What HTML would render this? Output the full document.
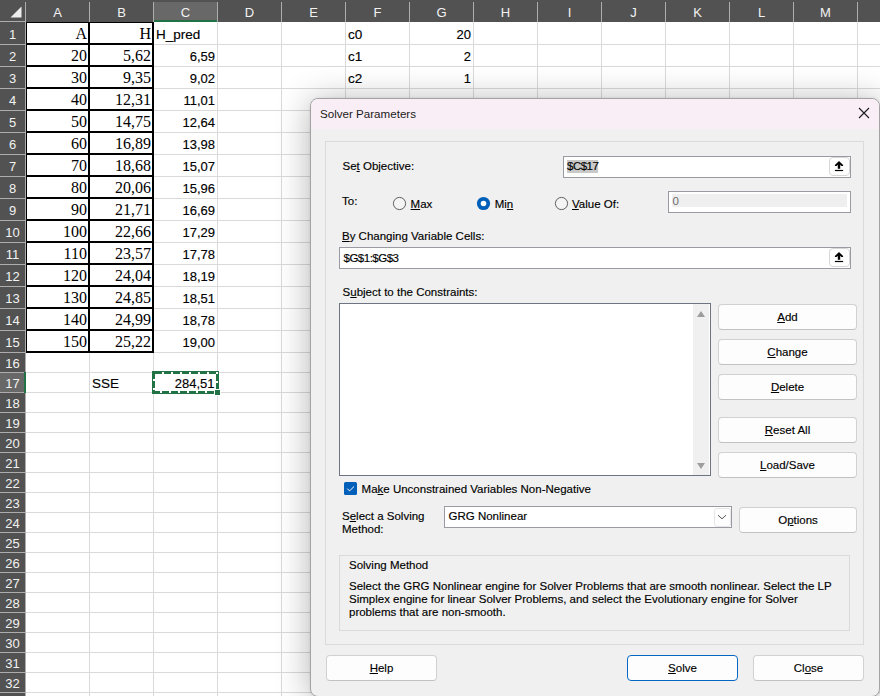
<!DOCTYPE html><html><head><meta charset="utf-8"><style>html,body{margin:0;padding:0;}body{width:880px;height:696px;overflow:hidden;position:relative;background:#fff;font-family:"Liberation Sans",sans-serif;}u{text-decoration:underline;text-underline-offset:1px;text-decoration-thickness:1px;}</style></head><body>
<div style="position:absolute;left:89px;top:22px;width:1px;height:674px;background:#dadada"></div>
<div style="position:absolute;left:153px;top:22px;width:1px;height:674px;background:#dadada"></div>
<div style="position:absolute;left:217px;top:22px;width:1px;height:674px;background:#dadada"></div>
<div style="position:absolute;left:281px;top:22px;width:1px;height:674px;background:#dadada"></div>
<div style="position:absolute;left:345px;top:22px;width:1px;height:674px;background:#dadada"></div>
<div style="position:absolute;left:409px;top:22px;width:1px;height:674px;background:#dadada"></div>
<div style="position:absolute;left:473px;top:22px;width:1px;height:674px;background:#dadada"></div>
<div style="position:absolute;left:537px;top:22px;width:1px;height:674px;background:#dadada"></div>
<div style="position:absolute;left:601px;top:22px;width:1px;height:674px;background:#dadada"></div>
<div style="position:absolute;left:665px;top:22px;width:1px;height:674px;background:#dadada"></div>
<div style="position:absolute;left:729px;top:22px;width:1px;height:674px;background:#dadada"></div>
<div style="position:absolute;left:793px;top:22px;width:1px;height:674px;background:#dadada"></div>
<div style="position:absolute;left:857px;top:22px;width:1px;height:674px;background:#dadada"></div>
<div style="position:absolute;left:921px;top:22px;width:1px;height:674px;background:#dadada"></div>
<div style="position:absolute;left:26px;top:44px;width:854px;height:1px;background:#dadada"></div>
<div style="position:absolute;left:26px;top:66px;width:854px;height:1px;background:#dadada"></div>
<div style="position:absolute;left:26px;top:88px;width:854px;height:1px;background:#dadada"></div>
<div style="position:absolute;left:26px;top:110px;width:854px;height:1px;background:#dadada"></div>
<div style="position:absolute;left:26px;top:132px;width:854px;height:1px;background:#dadada"></div>
<div style="position:absolute;left:26px;top:154px;width:854px;height:1px;background:#dadada"></div>
<div style="position:absolute;left:26px;top:176px;width:854px;height:1px;background:#dadada"></div>
<div style="position:absolute;left:26px;top:198px;width:854px;height:1px;background:#dadada"></div>
<div style="position:absolute;left:26px;top:220px;width:854px;height:1px;background:#dadada"></div>
<div style="position:absolute;left:26px;top:242px;width:854px;height:1px;background:#dadada"></div>
<div style="position:absolute;left:26px;top:264px;width:854px;height:1px;background:#dadada"></div>
<div style="position:absolute;left:26px;top:286px;width:854px;height:1px;background:#dadada"></div>
<div style="position:absolute;left:26px;top:308px;width:854px;height:1px;background:#dadada"></div>
<div style="position:absolute;left:26px;top:330px;width:854px;height:1px;background:#dadada"></div>
<div style="position:absolute;left:26px;top:352px;width:854px;height:1px;background:#dadada"></div>
<div style="position:absolute;left:26px;top:372px;width:854px;height:1px;background:#dadada"></div>
<div style="position:absolute;left:26px;top:392px;width:854px;height:1px;background:#dadada"></div>
<div style="position:absolute;left:26px;top:412px;width:854px;height:1px;background:#dadada"></div>
<div style="position:absolute;left:26px;top:432px;width:854px;height:1px;background:#dadada"></div>
<div style="position:absolute;left:26px;top:452px;width:854px;height:1px;background:#dadada"></div>
<div style="position:absolute;left:26px;top:472px;width:854px;height:1px;background:#dadada"></div>
<div style="position:absolute;left:26px;top:492px;width:854px;height:1px;background:#dadada"></div>
<div style="position:absolute;left:26px;top:512px;width:854px;height:1px;background:#dadada"></div>
<div style="position:absolute;left:26px;top:532px;width:854px;height:1px;background:#dadada"></div>
<div style="position:absolute;left:26px;top:552px;width:854px;height:1px;background:#dadada"></div>
<div style="position:absolute;left:26px;top:572px;width:854px;height:1px;background:#dadada"></div>
<div style="position:absolute;left:26px;top:592px;width:854px;height:1px;background:#dadada"></div>
<div style="position:absolute;left:26px;top:612px;width:854px;height:1px;background:#dadada"></div>
<div style="position:absolute;left:26px;top:632px;width:854px;height:1px;background:#dadada"></div>
<div style="position:absolute;left:26px;top:652px;width:854px;height:1px;background:#dadada"></div>
<div style="position:absolute;left:26px;top:672px;width:854px;height:1px;background:#dadada"></div>
<div style="position:absolute;left:26px;top:692px;width:854px;height:1px;background:#dadada"></div>
<div style="position:absolute;left:0px;top:0px;width:880px;height:22px;background:#525252"></div>
<div style="position:absolute;left:0px;top:0px;width:25px;height:696px;background:#525252"></div>
<div style="position:absolute;left:154px;top:2px;width:63px;height:20px;background:#686868"></div>
<div style="position:absolute;left:153px;top:20px;width:65px;height:2px;background:#217346"></div>
<div style="position:absolute;left:0px;top:373px;width:25px;height:19px;background:#686868"></div>
<div style="position:absolute;left:89px;top:2px;width:1px;height:20px;background:#adadad"></div>
<div style="position:absolute;left:153px;top:2px;width:1px;height:20px;background:#adadad"></div>
<div style="position:absolute;left:217px;top:2px;width:1px;height:20px;background:#adadad"></div>
<div style="position:absolute;left:281px;top:2px;width:1px;height:20px;background:#adadad"></div>
<div style="position:absolute;left:345px;top:2px;width:1px;height:20px;background:#adadad"></div>
<div style="position:absolute;left:409px;top:2px;width:1px;height:20px;background:#adadad"></div>
<div style="position:absolute;left:473px;top:2px;width:1px;height:20px;background:#adadad"></div>
<div style="position:absolute;left:537px;top:2px;width:1px;height:20px;background:#adadad"></div>
<div style="position:absolute;left:601px;top:2px;width:1px;height:20px;background:#adadad"></div>
<div style="position:absolute;left:665px;top:2px;width:1px;height:20px;background:#adadad"></div>
<div style="position:absolute;left:729px;top:2px;width:1px;height:20px;background:#adadad"></div>
<div style="position:absolute;left:793px;top:2px;width:1px;height:20px;background:#adadad"></div>
<div style="position:absolute;left:857px;top:2px;width:1px;height:20px;background:#adadad"></div>
<div style="position:absolute;left:921px;top:2px;width:1px;height:20px;background:#adadad"></div>
<div style="position:absolute;left:25px;top:2px;width:1px;height:696px;background:#adadad"></div>
<div style="position:absolute;left:0px;top:21px;width:25px;height:1px;background:#adadad"></div>
<div style="position:absolute;left:0px;top:44px;width:25px;height:1px;background:#adadad"></div>
<div style="position:absolute;left:0px;top:66px;width:25px;height:1px;background:#adadad"></div>
<div style="position:absolute;left:0px;top:88px;width:25px;height:1px;background:#adadad"></div>
<div style="position:absolute;left:0px;top:110px;width:25px;height:1px;background:#adadad"></div>
<div style="position:absolute;left:0px;top:132px;width:25px;height:1px;background:#adadad"></div>
<div style="position:absolute;left:0px;top:154px;width:25px;height:1px;background:#adadad"></div>
<div style="position:absolute;left:0px;top:176px;width:25px;height:1px;background:#adadad"></div>
<div style="position:absolute;left:0px;top:198px;width:25px;height:1px;background:#adadad"></div>
<div style="position:absolute;left:0px;top:220px;width:25px;height:1px;background:#adadad"></div>
<div style="position:absolute;left:0px;top:242px;width:25px;height:1px;background:#adadad"></div>
<div style="position:absolute;left:0px;top:264px;width:25px;height:1px;background:#adadad"></div>
<div style="position:absolute;left:0px;top:286px;width:25px;height:1px;background:#adadad"></div>
<div style="position:absolute;left:0px;top:308px;width:25px;height:1px;background:#adadad"></div>
<div style="position:absolute;left:0px;top:330px;width:25px;height:1px;background:#adadad"></div>
<div style="position:absolute;left:0px;top:352px;width:25px;height:1px;background:#adadad"></div>
<div style="position:absolute;left:0px;top:372px;width:25px;height:1px;background:#adadad"></div>
<div style="position:absolute;left:0px;top:392px;width:25px;height:1px;background:#adadad"></div>
<div style="position:absolute;left:0px;top:412px;width:25px;height:1px;background:#adadad"></div>
<div style="position:absolute;left:0px;top:432px;width:25px;height:1px;background:#adadad"></div>
<div style="position:absolute;left:0px;top:452px;width:25px;height:1px;background:#adadad"></div>
<div style="position:absolute;left:0px;top:472px;width:25px;height:1px;background:#adadad"></div>
<div style="position:absolute;left:0px;top:492px;width:25px;height:1px;background:#adadad"></div>
<div style="position:absolute;left:0px;top:512px;width:25px;height:1px;background:#adadad"></div>
<div style="position:absolute;left:0px;top:532px;width:25px;height:1px;background:#adadad"></div>
<div style="position:absolute;left:0px;top:552px;width:25px;height:1px;background:#adadad"></div>
<div style="position:absolute;left:0px;top:572px;width:25px;height:1px;background:#adadad"></div>
<div style="position:absolute;left:0px;top:592px;width:25px;height:1px;background:#adadad"></div>
<div style="position:absolute;left:0px;top:612px;width:25px;height:1px;background:#adadad"></div>
<div style="position:absolute;left:0px;top:632px;width:25px;height:1px;background:#adadad"></div>
<div style="position:absolute;left:0px;top:652px;width:25px;height:1px;background:#adadad"></div>
<div style="position:absolute;left:0px;top:672px;width:25px;height:1px;background:#adadad"></div>
<div style="position:absolute;left:0px;top:692px;width:25px;height:1px;background:#adadad"></div>
<div style="position:absolute;left:24px;top:372px;width:2px;height:21px;background:#217346"></div>
<svg style="position:absolute;left:0;top:0" width="25" height="21"><polygon points="10.5,17.5 21.5,6.5 21.5,17.5" fill="#eeeeee"/></svg>
<div style="position:absolute;left:-142.5px;width:400px;top:5.90px;line-height:13px;font-size:13px;font-family:'Liberation Sans', sans-serif;color:#f2f2f2;white-space:pre;text-align:center;">A</div>
<div style="position:absolute;left:-78.5px;width:400px;top:5.90px;line-height:13px;font-size:13px;font-family:'Liberation Sans', sans-serif;color:#f2f2f2;white-space:pre;text-align:center;">B</div>
<div style="position:absolute;left:-14.5px;width:400px;top:5.90px;line-height:13px;font-size:13px;font-family:'Liberation Sans', sans-serif;color:#f2f2f2;white-space:pre;text-align:center;">C</div>
<div style="position:absolute;left:49.5px;width:400px;top:5.90px;line-height:13px;font-size:13px;font-family:'Liberation Sans', sans-serif;color:#f2f2f2;white-space:pre;text-align:center;">D</div>
<div style="position:absolute;left:113.5px;width:400px;top:5.90px;line-height:13px;font-size:13px;font-family:'Liberation Sans', sans-serif;color:#f2f2f2;white-space:pre;text-align:center;">E</div>
<div style="position:absolute;left:177.5px;width:400px;top:5.90px;line-height:13px;font-size:13px;font-family:'Liberation Sans', sans-serif;color:#f2f2f2;white-space:pre;text-align:center;">F</div>
<div style="position:absolute;left:241.5px;width:400px;top:5.90px;line-height:13px;font-size:13px;font-family:'Liberation Sans', sans-serif;color:#f2f2f2;white-space:pre;text-align:center;">G</div>
<div style="position:absolute;left:305.5px;width:400px;top:5.90px;line-height:13px;font-size:13px;font-family:'Liberation Sans', sans-serif;color:#f2f2f2;white-space:pre;text-align:center;">H</div>
<div style="position:absolute;left:369.5px;width:400px;top:5.90px;line-height:13px;font-size:13px;font-family:'Liberation Sans', sans-serif;color:#f2f2f2;white-space:pre;text-align:center;">I</div>
<div style="position:absolute;left:433.5px;width:400px;top:5.90px;line-height:13px;font-size:13px;font-family:'Liberation Sans', sans-serif;color:#f2f2f2;white-space:pre;text-align:center;">J</div>
<div style="position:absolute;left:497.5px;width:400px;top:5.90px;line-height:13px;font-size:13px;font-family:'Liberation Sans', sans-serif;color:#f2f2f2;white-space:pre;text-align:center;">K</div>
<div style="position:absolute;left:561.5px;width:400px;top:5.90px;line-height:13px;font-size:13px;font-family:'Liberation Sans', sans-serif;color:#f2f2f2;white-space:pre;text-align:center;">L</div>
<div style="position:absolute;left:625.5px;width:400px;top:5.90px;line-height:13px;font-size:13px;font-family:'Liberation Sans', sans-serif;color:#f2f2f2;white-space:pre;text-align:center;">M</div>
<div style="position:absolute;left:689.5px;width:400px;top:5.90px;line-height:13px;font-size:13px;font-family:'Liberation Sans', sans-serif;color:#f2f2f2;white-space:pre;text-align:center;">N</div>
<div style="position:absolute;left:-187.5px;width:400px;top:28.40px;line-height:13px;font-size:13px;font-family:'Liberation Sans', sans-serif;color:#f2f2f2;white-space:pre;text-align:center;">1</div>
<div style="position:absolute;left:-187.5px;width:400px;top:50.40px;line-height:13px;font-size:13px;font-family:'Liberation Sans', sans-serif;color:#f2f2f2;white-space:pre;text-align:center;">2</div>
<div style="position:absolute;left:-187.5px;width:400px;top:72.40px;line-height:13px;font-size:13px;font-family:'Liberation Sans', sans-serif;color:#f2f2f2;white-space:pre;text-align:center;">3</div>
<div style="position:absolute;left:-187.5px;width:400px;top:94.40px;line-height:13px;font-size:13px;font-family:'Liberation Sans', sans-serif;color:#f2f2f2;white-space:pre;text-align:center;">4</div>
<div style="position:absolute;left:-187.5px;width:400px;top:116.40px;line-height:13px;font-size:13px;font-family:'Liberation Sans', sans-serif;color:#f2f2f2;white-space:pre;text-align:center;">5</div>
<div style="position:absolute;left:-187.5px;width:400px;top:138.40px;line-height:13px;font-size:13px;font-family:'Liberation Sans', sans-serif;color:#f2f2f2;white-space:pre;text-align:center;">6</div>
<div style="position:absolute;left:-187.5px;width:400px;top:160.40px;line-height:13px;font-size:13px;font-family:'Liberation Sans', sans-serif;color:#f2f2f2;white-space:pre;text-align:center;">7</div>
<div style="position:absolute;left:-187.5px;width:400px;top:182.40px;line-height:13px;font-size:13px;font-family:'Liberation Sans', sans-serif;color:#f2f2f2;white-space:pre;text-align:center;">8</div>
<div style="position:absolute;left:-187.5px;width:400px;top:204.40px;line-height:13px;font-size:13px;font-family:'Liberation Sans', sans-serif;color:#f2f2f2;white-space:pre;text-align:center;">9</div>
<div style="position:absolute;left:-187.5px;width:400px;top:226.40px;line-height:13px;font-size:13px;font-family:'Liberation Sans', sans-serif;color:#f2f2f2;white-space:pre;text-align:center;">10</div>
<div style="position:absolute;left:-187.5px;width:400px;top:248.40px;line-height:13px;font-size:13px;font-family:'Liberation Sans', sans-serif;color:#f2f2f2;white-space:pre;text-align:center;">11</div>
<div style="position:absolute;left:-187.5px;width:400px;top:270.40px;line-height:13px;font-size:13px;font-family:'Liberation Sans', sans-serif;color:#f2f2f2;white-space:pre;text-align:center;">12</div>
<div style="position:absolute;left:-187.5px;width:400px;top:292.40px;line-height:13px;font-size:13px;font-family:'Liberation Sans', sans-serif;color:#f2f2f2;white-space:pre;text-align:center;">13</div>
<div style="position:absolute;left:-187.5px;width:400px;top:314.40px;line-height:13px;font-size:13px;font-family:'Liberation Sans', sans-serif;color:#f2f2f2;white-space:pre;text-align:center;">14</div>
<div style="position:absolute;left:-187.5px;width:400px;top:336.40px;line-height:13px;font-size:13px;font-family:'Liberation Sans', sans-serif;color:#f2f2f2;white-space:pre;text-align:center;">15</div>
<div style="position:absolute;left:-187.5px;width:400px;top:357.20px;line-height:13px;font-size:13px;font-family:'Liberation Sans', sans-serif;color:#f2f2f2;white-space:pre;text-align:center;">16</div>
<div style="position:absolute;left:-187.5px;width:400px;top:377.20px;line-height:13px;font-size:13px;font-family:'Liberation Sans', sans-serif;color:#f2f2f2;white-space:pre;text-align:center;">17</div>
<div style="position:absolute;left:-187.5px;width:400px;top:397.20px;line-height:13px;font-size:13px;font-family:'Liberation Sans', sans-serif;color:#f2f2f2;white-space:pre;text-align:center;">18</div>
<div style="position:absolute;left:-187.5px;width:400px;top:417.20px;line-height:13px;font-size:13px;font-family:'Liberation Sans', sans-serif;color:#f2f2f2;white-space:pre;text-align:center;">19</div>
<div style="position:absolute;left:-187.5px;width:400px;top:437.20px;line-height:13px;font-size:13px;font-family:'Liberation Sans', sans-serif;color:#f2f2f2;white-space:pre;text-align:center;">20</div>
<div style="position:absolute;left:-187.5px;width:400px;top:457.20px;line-height:13px;font-size:13px;font-family:'Liberation Sans', sans-serif;color:#f2f2f2;white-space:pre;text-align:center;">21</div>
<div style="position:absolute;left:-187.5px;width:400px;top:477.20px;line-height:13px;font-size:13px;font-family:'Liberation Sans', sans-serif;color:#f2f2f2;white-space:pre;text-align:center;">22</div>
<div style="position:absolute;left:-187.5px;width:400px;top:497.20px;line-height:13px;font-size:13px;font-family:'Liberation Sans', sans-serif;color:#f2f2f2;white-space:pre;text-align:center;">23</div>
<div style="position:absolute;left:-187.5px;width:400px;top:517.20px;line-height:13px;font-size:13px;font-family:'Liberation Sans', sans-serif;color:#f2f2f2;white-space:pre;text-align:center;">24</div>
<div style="position:absolute;left:-187.5px;width:400px;top:537.20px;line-height:13px;font-size:13px;font-family:'Liberation Sans', sans-serif;color:#f2f2f2;white-space:pre;text-align:center;">25</div>
<div style="position:absolute;left:-187.5px;width:400px;top:557.20px;line-height:13px;font-size:13px;font-family:'Liberation Sans', sans-serif;color:#f2f2f2;white-space:pre;text-align:center;">26</div>
<div style="position:absolute;left:-187.5px;width:400px;top:577.20px;line-height:13px;font-size:13px;font-family:'Liberation Sans', sans-serif;color:#f2f2f2;white-space:pre;text-align:center;">27</div>
<div style="position:absolute;left:-187.5px;width:400px;top:597.20px;line-height:13px;font-size:13px;font-family:'Liberation Sans', sans-serif;color:#f2f2f2;white-space:pre;text-align:center;">28</div>
<div style="position:absolute;left:-187.5px;width:400px;top:617.20px;line-height:13px;font-size:13px;font-family:'Liberation Sans', sans-serif;color:#f2f2f2;white-space:pre;text-align:center;">29</div>
<div style="position:absolute;left:-187.5px;width:400px;top:637.20px;line-height:13px;font-size:13px;font-family:'Liberation Sans', sans-serif;color:#f2f2f2;white-space:pre;text-align:center;">30</div>
<div style="position:absolute;left:-187.5px;width:400px;top:657.20px;line-height:13px;font-size:13px;font-family:'Liberation Sans', sans-serif;color:#f2f2f2;white-space:pre;text-align:center;">31</div>
<div style="position:absolute;left:-187.5px;width:400px;top:677.20px;line-height:13px;font-size:13px;font-family:'Liberation Sans', sans-serif;color:#f2f2f2;white-space:pre;text-align:center;">32</div>
<div style="position:absolute;right:793px;top:26.00px;line-height:16px;font-size:16px;font-family:'Liberation Serif', serif;color:#000;white-space:pre;text-align:right;-webkit-text-stroke:0.00px #000;">A</div>
<div style="position:absolute;right:729px;top:26.00px;line-height:16px;font-size:16px;font-family:'Liberation Serif', serif;color:#000;white-space:pre;text-align:right;-webkit-text-stroke:0.00px #000;">H</div>
<div style="position:absolute;left:156px;top:27.97px;line-height:13.5px;font-size:13.5px;font-family:'Liberation Sans', sans-serif;color:#000;white-space:pre;-webkit-text-stroke:0.15px #000;">H_pred</div>
<div style="position:absolute;right:793px;top:48.00px;line-height:16px;font-size:16px;font-family:'Liberation Serif', serif;color:#000;white-space:pre;text-align:right;-webkit-text-stroke:0.00px #000;">20</div>
<div style="position:absolute;right:729px;top:48.00px;line-height:16px;font-size:16px;font-family:'Liberation Serif', serif;color:#000;white-space:pre;text-align:right;-webkit-text-stroke:0.00px #000;">5,62</div>
<div style="position:absolute;right:665px;top:50.40px;line-height:13px;font-size:13px;font-family:'Liberation Sans', sans-serif;color:#000;white-space:pre;text-align:right;-webkit-text-stroke:0.15px #000;">6,59</div>
<div style="position:absolute;right:793px;top:70.00px;line-height:16px;font-size:16px;font-family:'Liberation Serif', serif;color:#000;white-space:pre;text-align:right;-webkit-text-stroke:0.00px #000;">30</div>
<div style="position:absolute;right:729px;top:70.00px;line-height:16px;font-size:16px;font-family:'Liberation Serif', serif;color:#000;white-space:pre;text-align:right;-webkit-text-stroke:0.00px #000;">9,35</div>
<div style="position:absolute;right:665px;top:72.40px;line-height:13px;font-size:13px;font-family:'Liberation Sans', sans-serif;color:#000;white-space:pre;text-align:right;-webkit-text-stroke:0.15px #000;">9,02</div>
<div style="position:absolute;right:793px;top:92.00px;line-height:16px;font-size:16px;font-family:'Liberation Serif', serif;color:#000;white-space:pre;text-align:right;-webkit-text-stroke:0.00px #000;">40</div>
<div style="position:absolute;right:729px;top:92.00px;line-height:16px;font-size:16px;font-family:'Liberation Serif', serif;color:#000;white-space:pre;text-align:right;-webkit-text-stroke:0.00px #000;">12,31</div>
<div style="position:absolute;right:665px;top:94.40px;line-height:13px;font-size:13px;font-family:'Liberation Sans', sans-serif;color:#000;white-space:pre;text-align:right;-webkit-text-stroke:0.15px #000;">11,01</div>
<div style="position:absolute;right:793px;top:114.00px;line-height:16px;font-size:16px;font-family:'Liberation Serif', serif;color:#000;white-space:pre;text-align:right;-webkit-text-stroke:0.00px #000;">50</div>
<div style="position:absolute;right:729px;top:114.00px;line-height:16px;font-size:16px;font-family:'Liberation Serif', serif;color:#000;white-space:pre;text-align:right;-webkit-text-stroke:0.00px #000;">14,75</div>
<div style="position:absolute;right:665px;top:116.40px;line-height:13px;font-size:13px;font-family:'Liberation Sans', sans-serif;color:#000;white-space:pre;text-align:right;-webkit-text-stroke:0.15px #000;">12,64</div>
<div style="position:absolute;right:793px;top:136.00px;line-height:16px;font-size:16px;font-family:'Liberation Serif', serif;color:#000;white-space:pre;text-align:right;-webkit-text-stroke:0.00px #000;">60</div>
<div style="position:absolute;right:729px;top:136.00px;line-height:16px;font-size:16px;font-family:'Liberation Serif', serif;color:#000;white-space:pre;text-align:right;-webkit-text-stroke:0.00px #000;">16,89</div>
<div style="position:absolute;right:665px;top:138.40px;line-height:13px;font-size:13px;font-family:'Liberation Sans', sans-serif;color:#000;white-space:pre;text-align:right;-webkit-text-stroke:0.15px #000;">13,98</div>
<div style="position:absolute;right:793px;top:158.00px;line-height:16px;font-size:16px;font-family:'Liberation Serif', serif;color:#000;white-space:pre;text-align:right;-webkit-text-stroke:0.00px #000;">70</div>
<div style="position:absolute;right:729px;top:158.00px;line-height:16px;font-size:16px;font-family:'Liberation Serif', serif;color:#000;white-space:pre;text-align:right;-webkit-text-stroke:0.00px #000;">18,68</div>
<div style="position:absolute;right:665px;top:160.40px;line-height:13px;font-size:13px;font-family:'Liberation Sans', sans-serif;color:#000;white-space:pre;text-align:right;-webkit-text-stroke:0.15px #000;">15,07</div>
<div style="position:absolute;right:793px;top:180.00px;line-height:16px;font-size:16px;font-family:'Liberation Serif', serif;color:#000;white-space:pre;text-align:right;-webkit-text-stroke:0.00px #000;">80</div>
<div style="position:absolute;right:729px;top:180.00px;line-height:16px;font-size:16px;font-family:'Liberation Serif', serif;color:#000;white-space:pre;text-align:right;-webkit-text-stroke:0.00px #000;">20,06</div>
<div style="position:absolute;right:665px;top:182.40px;line-height:13px;font-size:13px;font-family:'Liberation Sans', sans-serif;color:#000;white-space:pre;text-align:right;-webkit-text-stroke:0.15px #000;">15,96</div>
<div style="position:absolute;right:793px;top:202.00px;line-height:16px;font-size:16px;font-family:'Liberation Serif', serif;color:#000;white-space:pre;text-align:right;-webkit-text-stroke:0.00px #000;">90</div>
<div style="position:absolute;right:729px;top:202.00px;line-height:16px;font-size:16px;font-family:'Liberation Serif', serif;color:#000;white-space:pre;text-align:right;-webkit-text-stroke:0.00px #000;">21,71</div>
<div style="position:absolute;right:665px;top:204.40px;line-height:13px;font-size:13px;font-family:'Liberation Sans', sans-serif;color:#000;white-space:pre;text-align:right;-webkit-text-stroke:0.15px #000;">16,69</div>
<div style="position:absolute;right:793px;top:224.00px;line-height:16px;font-size:16px;font-family:'Liberation Serif', serif;color:#000;white-space:pre;text-align:right;-webkit-text-stroke:0.00px #000;">100</div>
<div style="position:absolute;right:729px;top:224.00px;line-height:16px;font-size:16px;font-family:'Liberation Serif', serif;color:#000;white-space:pre;text-align:right;-webkit-text-stroke:0.00px #000;">22,66</div>
<div style="position:absolute;right:665px;top:226.40px;line-height:13px;font-size:13px;font-family:'Liberation Sans', sans-serif;color:#000;white-space:pre;text-align:right;-webkit-text-stroke:0.15px #000;">17,29</div>
<div style="position:absolute;right:793px;top:246.00px;line-height:16px;font-size:16px;font-family:'Liberation Serif', serif;color:#000;white-space:pre;text-align:right;-webkit-text-stroke:0.00px #000;">110</div>
<div style="position:absolute;right:729px;top:246.00px;line-height:16px;font-size:16px;font-family:'Liberation Serif', serif;color:#000;white-space:pre;text-align:right;-webkit-text-stroke:0.00px #000;">23,57</div>
<div style="position:absolute;right:665px;top:248.40px;line-height:13px;font-size:13px;font-family:'Liberation Sans', sans-serif;color:#000;white-space:pre;text-align:right;-webkit-text-stroke:0.15px #000;">17,78</div>
<div style="position:absolute;right:793px;top:268.00px;line-height:16px;font-size:16px;font-family:'Liberation Serif', serif;color:#000;white-space:pre;text-align:right;-webkit-text-stroke:0.00px #000;">120</div>
<div style="position:absolute;right:729px;top:268.00px;line-height:16px;font-size:16px;font-family:'Liberation Serif', serif;color:#000;white-space:pre;text-align:right;-webkit-text-stroke:0.00px #000;">24,04</div>
<div style="position:absolute;right:665px;top:270.40px;line-height:13px;font-size:13px;font-family:'Liberation Sans', sans-serif;color:#000;white-space:pre;text-align:right;-webkit-text-stroke:0.15px #000;">18,19</div>
<div style="position:absolute;right:793px;top:290.00px;line-height:16px;font-size:16px;font-family:'Liberation Serif', serif;color:#000;white-space:pre;text-align:right;-webkit-text-stroke:0.00px #000;">130</div>
<div style="position:absolute;right:729px;top:290.00px;line-height:16px;font-size:16px;font-family:'Liberation Serif', serif;color:#000;white-space:pre;text-align:right;-webkit-text-stroke:0.00px #000;">24,85</div>
<div style="position:absolute;right:665px;top:292.40px;line-height:13px;font-size:13px;font-family:'Liberation Sans', sans-serif;color:#000;white-space:pre;text-align:right;-webkit-text-stroke:0.15px #000;">18,51</div>
<div style="position:absolute;right:793px;top:312.00px;line-height:16px;font-size:16px;font-family:'Liberation Serif', serif;color:#000;white-space:pre;text-align:right;-webkit-text-stroke:0.00px #000;">140</div>
<div style="position:absolute;right:729px;top:312.00px;line-height:16px;font-size:16px;font-family:'Liberation Serif', serif;color:#000;white-space:pre;text-align:right;-webkit-text-stroke:0.00px #000;">24,99</div>
<div style="position:absolute;right:665px;top:314.40px;line-height:13px;font-size:13px;font-family:'Liberation Sans', sans-serif;color:#000;white-space:pre;text-align:right;-webkit-text-stroke:0.15px #000;">18,78</div>
<div style="position:absolute;right:793px;top:334.00px;line-height:16px;font-size:16px;font-family:'Liberation Serif', serif;color:#000;white-space:pre;text-align:right;-webkit-text-stroke:0.00px #000;">150</div>
<div style="position:absolute;right:729px;top:334.00px;line-height:16px;font-size:16px;font-family:'Liberation Serif', serif;color:#000;white-space:pre;text-align:right;-webkit-text-stroke:0.00px #000;">25,22</div>
<div style="position:absolute;right:665px;top:336.40px;line-height:13px;font-size:13px;font-family:'Liberation Sans', sans-serif;color:#000;white-space:pre;text-align:right;-webkit-text-stroke:0.15px #000;">19,00</div>
<div style="position:absolute;left:26px;top:22px;width:128px;height:1px;background:#000"></div>
<div style="position:absolute;left:26px;top:22px;width:1px;height:331px;background:#000"></div>
<div style="position:absolute;left:88px;top:22px;width:2px;height:331px;background:#000"></div>
<div style="position:absolute;left:152px;top:22px;width:2px;height:331px;background:#000"></div>
<div style="position:absolute;left:26px;top:43px;width:128px;height:2px;background:#000"></div>
<div style="position:absolute;left:26px;top:65px;width:128px;height:2px;background:#000"></div>
<div style="position:absolute;left:26px;top:87px;width:128px;height:2px;background:#000"></div>
<div style="position:absolute;left:26px;top:109px;width:128px;height:2px;background:#000"></div>
<div style="position:absolute;left:26px;top:131px;width:128px;height:2px;background:#000"></div>
<div style="position:absolute;left:26px;top:153px;width:128px;height:2px;background:#000"></div>
<div style="position:absolute;left:26px;top:175px;width:128px;height:2px;background:#000"></div>
<div style="position:absolute;left:26px;top:197px;width:128px;height:2px;background:#000"></div>
<div style="position:absolute;left:26px;top:219px;width:128px;height:2px;background:#000"></div>
<div style="position:absolute;left:26px;top:241px;width:128px;height:2px;background:#000"></div>
<div style="position:absolute;left:26px;top:263px;width:128px;height:2px;background:#000"></div>
<div style="position:absolute;left:26px;top:285px;width:128px;height:2px;background:#000"></div>
<div style="position:absolute;left:26px;top:307px;width:128px;height:2px;background:#000"></div>
<div style="position:absolute;left:26px;top:329px;width:128px;height:2px;background:#000"></div>
<div style="position:absolute;left:26px;top:351px;width:128px;height:2px;background:#000"></div>
<div style="position:absolute;left:348px;top:27.97px;line-height:13.5px;font-size:13.5px;font-family:'Liberation Sans', sans-serif;color:#000;white-space:pre;-webkit-text-stroke:0.15px #000;">c0</div>
<div style="position:absolute;left:348px;top:49.97px;line-height:13.5px;font-size:13.5px;font-family:'Liberation Sans', sans-serif;color:#000;white-space:pre;-webkit-text-stroke:0.15px #000;">c1</div>
<div style="position:absolute;left:348px;top:71.97px;line-height:13.5px;font-size:13.5px;font-family:'Liberation Sans', sans-serif;color:#000;white-space:pre;-webkit-text-stroke:0.15px #000;">c2</div>
<div style="position:absolute;right:409px;top:28.40px;line-height:13px;font-size:13px;font-family:'Liberation Sans', sans-serif;color:#000;white-space:pre;text-align:right;-webkit-text-stroke:0.15px #000;">20</div>
<div style="position:absolute;right:409px;top:50.40px;line-height:13px;font-size:13px;font-family:'Liberation Sans', sans-serif;color:#000;white-space:pre;text-align:right;-webkit-text-stroke:0.15px #000;">2</div>
<div style="position:absolute;right:409px;top:72.40px;line-height:13px;font-size:13px;font-family:'Liberation Sans', sans-serif;color:#000;white-space:pre;text-align:right;-webkit-text-stroke:0.15px #000;">1</div>
<div style="position:absolute;left:92px;top:376.77px;line-height:13.5px;font-size:13.5px;font-family:'Liberation Sans', sans-serif;color:#000;white-space:pre;-webkit-text-stroke:0.15px #000;">SSE</div>
<div style="position:absolute;right:665.5px;top:377.20px;line-height:13px;font-size:13px;font-family:'Liberation Sans', sans-serif;color:#000;white-space:pre;text-align:right;-webkit-text-stroke:0.15px #000;">284,51</div>
<div style="position:absolute;left:152px;top:371px;width:61px;height:17px;border:3px solid #217346"></div>
<div style="position:absolute;left:162px;top:372px;width:2px;height:2px;background:#fff"></div>
<div style="position:absolute;left:171px;top:372px;width:2px;height:2px;background:#fff"></div>
<div style="position:absolute;left:180px;top:372px;width:2px;height:2px;background:#fff"></div>
<div style="position:absolute;left:189px;top:372px;width:2px;height:2px;background:#fff"></div>
<div style="position:absolute;left:198px;top:372px;width:2px;height:2px;background:#fff"></div>
<div style="position:absolute;left:207px;top:372px;width:2px;height:2px;background:#fff"></div>
<div style="position:absolute;left:216px;top:372px;width:2px;height:2px;background:#fff"></div>
<div style="position:absolute;left:153px;top:379px;width:2px;height:2px;background:#fff"></div>
<div style="position:absolute;left:153px;top:388px;width:2px;height:2px;background:#fff"></div>
<div style="position:absolute;left:216px;top:381px;width:2px;height:2px;background:#fff"></div>
<div style="position:absolute;left:160px;top:391px;width:2px;height:2px;background:#fff"></div>
<div style="position:absolute;left:169px;top:391px;width:2px;height:2px;background:#fff"></div>
<div style="position:absolute;left:178px;top:391px;width:2px;height:2px;background:#fff"></div>
<div style="position:absolute;left:187px;top:391px;width:2px;height:2px;background:#fff"></div>
<div style="position:absolute;left:196px;top:391px;width:2px;height:2px;background:#fff"></div>
<div style="position:absolute;left:205px;top:391px;width:2px;height:2px;background:#fff"></div>
<div style="position:absolute;left:214px;top:389px;width:7px;height:7px;background:#fff"></div>
<div style="position:absolute;left:215px;top:390px;width:5px;height:5px;background:#217346"></div>
<div style="position:absolute;left:310px;top:98px;width:568px;height:597px;border:1px solid #a3a3a3;border-radius:8px;background:#f0f0f0;box-shadow:0 0 3px rgba(0,0,0,0.08), 0 3px 34px rgba(0,0,0,0.30);overflow:hidden"><div style="position:absolute;left:0;top:0;width:100%;height:30px;background:#f9eef5"></div></div>
<div style="position:absolute;left:320px;top:107.98px;line-height:11.6px;font-size:11.6px;font-family:'Liberation Sans', sans-serif;color:#1a1a1a;white-space:pre;">Solver Parameters</div>
<svg style="position:absolute;left:858px;top:107px" width="12" height="12"><path d="M1 1L11 11M11 1L1 11" stroke="#1a1a1a" stroke-width="1.1" fill="none"/></svg>
<div style="position:absolute;left:325px;top:141px;width:537px;height:502px;border:1px solid #dadada"></div>
<div style="position:absolute;left:342.5px;top:160.77px;line-height:11.5px;font-size:11.5px;font-family:'Liberation Sans', sans-serif;color:#000;white-space:pre;-webkit-text-stroke:0.15px #000;">Se<u>t</u> Objective:</div>
<div style="position:absolute;left:563px;top:156px;width:286px;height:20px;border:1px solid #9a9ba2;background:#fff"></div>
<div style="position:absolute;left:567px;top:160px;width:31px;height:13px;background:#c8c8c8"></div>
<div style="position:absolute;left:567px;top:160.77px;line-height:11.5px;font-size:11.5px;font-family:'Liberation Sans', sans-serif;color:#000;white-space:pre;-webkit-text-stroke:0.15px #000;letter-spacing:-0.5px">$C$17</div>
<div style="position:absolute;left:829px;top:157px;width:19px;height:17px;border:1px solid #d6d6d6;border-radius:4px;background:#fefefe"></div>
<svg style="position:absolute;left:829px;top:157px" width="21" height="20"><polygon points="10,3.9 14.1,8 14.1,8.9 12.4,8.9 11.2,7.7 11.2,11.8 8.8,11.8 8.8,7.7 7.6,8.9 5.9,8.9 5.9,8" fill="#000"/><rect x="5.9" y="12.9" width="8.2" height="1.2" fill="#000"/></svg>
<div style="position:absolute;left:342px;top:196.07px;line-height:11.5px;font-size:11.5px;font-family:'Liberation Sans', sans-serif;color:#000;white-space:pre;-webkit-text-stroke:0.15px #000;">To:</div>
<svg style="position:absolute;left:392.0px;top:195.9px" width="15" height="15"><circle cx="7.5" cy="7.5" r="6.1" fill="#f4f4f4" stroke="#5f5f5f" stroke-width="1"/></svg>
<div style="position:absolute;left:410.6px;top:198.67px;line-height:11.5px;font-size:11.5px;font-family:'Liberation Sans', sans-serif;color:#000;white-space:pre;-webkit-text-stroke:0.15px #000;"><u>M</u>ax</div>
<svg style="position:absolute;left:476.0px;top:195.9px" width="15" height="15"><circle cx="7.5" cy="7.5" r="6.6" fill="#005fb8"/><circle cx="7.5" cy="7.5" r="2.8" fill="#fff"/></svg>
<div style="position:absolute;left:494.7px;top:198.67px;line-height:11.5px;font-size:11.5px;font-family:'Liberation Sans', sans-serif;color:#000;white-space:pre;-webkit-text-stroke:0.15px #000;">Mi<u>n</u></div>
<svg style="position:absolute;left:554.0px;top:195.9px" width="15" height="15"><circle cx="7.5" cy="7.5" r="6.1" fill="#f4f4f4" stroke="#5f5f5f" stroke-width="1"/></svg>
<div style="position:absolute;left:572px;top:198.67px;line-height:11.5px;font-size:11.5px;font-family:'Liberation Sans', sans-serif;color:#000;white-space:pre;-webkit-text-stroke:0.15px #000;"><u>V</u>alue Of:</div>
<div style="position:absolute;left:668px;top:191px;width:181px;height:20px;border:1px solid #9a9ba2;background:#fff"></div>
<div style="position:absolute;left:672px;top:194px;width:175px;height:13px;background:#efefef"></div>
<div style="position:absolute;left:672.5px;top:196.07px;line-height:11.5px;font-size:11.5px;font-family:'Liberation Sans', sans-serif;color:#6d6d6d;white-space:pre;">0</div>
<div style="position:absolute;left:342px;top:231.47px;line-height:11.5px;font-size:11.5px;font-family:'Liberation Sans', sans-serif;color:#000;white-space:pre;-webkit-text-stroke:0.15px #000;"><u>B</u>y Changing Variable Cells:</div>
<div style="position:absolute;left:339px;top:247px;width:510px;height:20px;border:1px solid #9a9ba2;background:#fff"></div>
<div style="position:absolute;left:343.5px;top:253.07px;line-height:11.5px;font-size:11.5px;font-family:'Liberation Sans', sans-serif;color:#000;white-space:pre;-webkit-text-stroke:0.15px #000;letter-spacing:-0.5px">$G$1:$G$3</div>
<div style="position:absolute;left:829px;top:248px;width:19px;height:17px;border:1px solid #d6d6d6;border-radius:4px;background:#fefefe"></div>
<svg style="position:absolute;left:829px;top:248px" width="21" height="20"><polygon points="10,3.9 14.1,8 14.1,8.9 12.4,8.9 11.2,7.7 11.2,11.8 8.8,11.8 8.8,7.7 7.6,8.9 5.9,8.9 5.9,8" fill="#000"/><rect x="5.9" y="12.9" width="8.2" height="1.2" fill="#000"/></svg>
<div style="position:absolute;left:342.6px;top:287.07px;line-height:11.5px;font-size:11.5px;font-family:'Liberation Sans', sans-serif;color:#000;white-space:pre;-webkit-text-stroke:0.15px #000;">S<u>u</u>bject to the Constraints:</div>
<div style="position:absolute;left:339px;top:303px;width:370px;height:171px;border:1px solid #6e7582;background:#fff"></div>
<div style="position:absolute;left:693px;top:304px;width:16px;height:171px;background:#f0f0f0"></div>
<svg style="position:absolute;left:693px;top:304px" width="16" height="171"><polygon points="4,13 12,13 8,7" fill="#9d9d9d"/><polygon points="4,159 12,159 8,165" fill="#9d9d9d"/></svg>
<div style="position:absolute;left:718px;top:304px;width:137px;height:24px;border:1px solid #d1d1d1;border-bottom-color:#c2c2c2;border-radius:4px;background:#fdfdfd"></div>
<div style="position:absolute;left:587.5px;width:400px;top:311.67px;line-height:11.5px;font-size:11.5px;font-family:'Liberation Sans', sans-serif;color:#000;white-space:pre;text-align:center;-webkit-text-stroke:0.15px #000;"><u>A</u>dd</div>
<div style="position:absolute;left:718px;top:339px;width:137px;height:24px;border:1px solid #d1d1d1;border-bottom-color:#c2c2c2;border-radius:4px;background:#fdfdfd"></div>
<div style="position:absolute;left:587.5px;width:400px;top:346.67px;line-height:11.5px;font-size:11.5px;font-family:'Liberation Sans', sans-serif;color:#000;white-space:pre;text-align:center;-webkit-text-stroke:0.15px #000;"><u>C</u>hange</div>
<div style="position:absolute;left:718px;top:374px;width:137px;height:24px;border:1px solid #d1d1d1;border-bottom-color:#c2c2c2;border-radius:4px;background:#fdfdfd"></div>
<div style="position:absolute;left:587.5px;width:400px;top:381.67px;line-height:11.5px;font-size:11.5px;font-family:'Liberation Sans', sans-serif;color:#000;white-space:pre;text-align:center;-webkit-text-stroke:0.15px #000;"><u>D</u>elete</div>
<div style="position:absolute;left:718px;top:417px;width:137px;height:24px;border:1px solid #d1d1d1;border-bottom-color:#c2c2c2;border-radius:4px;background:#fdfdfd"></div>
<div style="position:absolute;left:587.5px;width:400px;top:424.67px;line-height:11.5px;font-size:11.5px;font-family:'Liberation Sans', sans-serif;color:#000;white-space:pre;text-align:center;-webkit-text-stroke:0.15px #000;"><u>R</u>eset All</div>
<div style="position:absolute;left:718px;top:452px;width:137px;height:24px;border:1px solid #d1d1d1;border-bottom-color:#c2c2c2;border-radius:4px;background:#fdfdfd"></div>
<div style="position:absolute;left:587.5px;width:400px;top:459.67px;line-height:11.5px;font-size:11.5px;font-family:'Liberation Sans', sans-serif;color:#000;white-space:pre;text-align:center;-webkit-text-stroke:0.15px #000;"><u>L</u>oad/Save</div>
<svg style="position:absolute;left:344px;top:482px" width="14" height="14"><rect x="0" y="0" width="13" height="13" rx="1.6" fill="#005fb8"/><path d="M3.3 6.6L5.6 8.9L10 4.5" stroke="#fff" stroke-width="1" fill="none"/></svg>
<div style="position:absolute;left:361.6px;top:483.87px;line-height:11.5px;font-size:11.5px;font-family:'Liberation Sans', sans-serif;color:#000;white-space:pre;-webkit-text-stroke:0.15px #000;">Ma<u>k</u>e Unconstrained Variables Non-Negative</div>
<div style="position:absolute;left:342px;top:510.57px;line-height:11.5px;font-size:11.5px;font-family:'Liberation Sans', sans-serif;color:#000;white-space:pre;-webkit-text-stroke:0.15px #000;">S<u>e</u>lect a Solving</div>
<div style="position:absolute;left:342px;top:523.77px;line-height:11.5px;font-size:11.5px;font-family:'Liberation Sans', sans-serif;color:#000;white-space:pre;-webkit-text-stroke:0.15px #000;">Method:</div>
<div style="position:absolute;left:444px;top:506px;width:286px;height:20px;border:1px solid #9a9ba2;background:#fff"></div>
<div style="position:absolute;left:714px;top:508px;width:15px;height:17px;border:1px solid #e6e6e6;border-radius:3px;background:#fdfdfd"></div>
<svg style="position:absolute;left:714px;top:508px" width="17" height="19"><path d="M4 7.2L8 10.8L12 7.2" stroke="#555" stroke-width="1" fill="none"/></svg>
<div style="position:absolute;left:448.5px;top:511.47px;line-height:11.5px;font-size:11.5px;font-family:'Liberation Sans', sans-serif;color:#000;white-space:pre;-webkit-text-stroke:0.15px #000;">GRG Nonlinear</div>
<div style="position:absolute;left:739px;top:507px;width:116px;height:24px;border:1px solid #d1d1d1;border-bottom-color:#c2c2c2;border-radius:4px;background:#fdfdfd"></div>
<div style="position:absolute;left:598.0px;width:400px;top:514.67px;line-height:11.5px;font-size:11.5px;font-family:'Liberation Sans', sans-serif;color:#000;white-space:pre;text-align:center;-webkit-text-stroke:0.15px #000;">O<u>p</u>tions</div>
<div style="position:absolute;left:339px;top:555px;width:509px;height:74px;border:1px solid #dadada"></div>
<div style="position:absolute;left:349px;top:560.07px;line-height:11.5px;font-size:11.5px;font-family:'Liberation Sans', sans-serif;color:#000;white-space:pre;-webkit-text-stroke:0.15px #000;">Solving Method</div>
<div style="position:absolute;left:349px;top:581.07px;line-height:11.5px;font-size:11.5px;font-family:'Liberation Sans', sans-serif;color:#000;white-space:pre;-webkit-text-stroke:0.15px #000;">Select the GRG Nonlinear engine for Solver Problems that are smooth nonlinear. Select the LP</div>
<div style="position:absolute;left:349px;top:594.37px;line-height:11.5px;font-size:11.5px;font-family:'Liberation Sans', sans-serif;color:#000;white-space:pre;-webkit-text-stroke:0.15px #000;">Simplex engine for linear Solver Problems, and select the Evolutionary engine for Solver</div>
<div style="position:absolute;left:349px;top:607.27px;line-height:11.5px;font-size:11.5px;font-family:'Liberation Sans', sans-serif;color:#000;white-space:pre;-webkit-text-stroke:0.15px #000;">problems that are non-smooth.</div>
<div style="position:absolute;left:326px;top:655px;width:109px;height:24px;border:1px solid #d1d1d1;border-bottom-color:#c2c2c2;border-radius:4px;background:#fdfdfd"></div>
<div style="position:absolute;left:181.5px;width:400px;top:662.67px;line-height:11.5px;font-size:11.5px;font-family:'Liberation Sans', sans-serif;color:#000;white-space:pre;text-align:center;-webkit-text-stroke:0.15px #000;"><u>H</u>elp</div>
<div style="position:absolute;left:627px;top:655px;width:109px;height:24px;border:1px solid #0567c4;border-radius:4px;background:#fdfdfd"></div>
<div style="position:absolute;left:482.5px;width:400px;top:662.67px;line-height:11.5px;font-size:11.5px;font-family:'Liberation Sans', sans-serif;color:#000;white-space:pre;text-align:center;-webkit-text-stroke:0.15px #000;"><u>S</u>olve</div>
<div style="position:absolute;left:753px;top:655px;width:109px;height:24px;border:1px solid #d1d1d1;border-bottom-color:#c2c2c2;border-radius:4px;background:#fdfdfd"></div>
<div style="position:absolute;left:608.5px;width:400px;top:662.67px;line-height:11.5px;font-size:11.5px;font-family:'Liberation Sans', sans-serif;color:#000;white-space:pre;text-align:center;-webkit-text-stroke:0.15px #000;">Cl<u>o</u>se</div>
</body></html>
